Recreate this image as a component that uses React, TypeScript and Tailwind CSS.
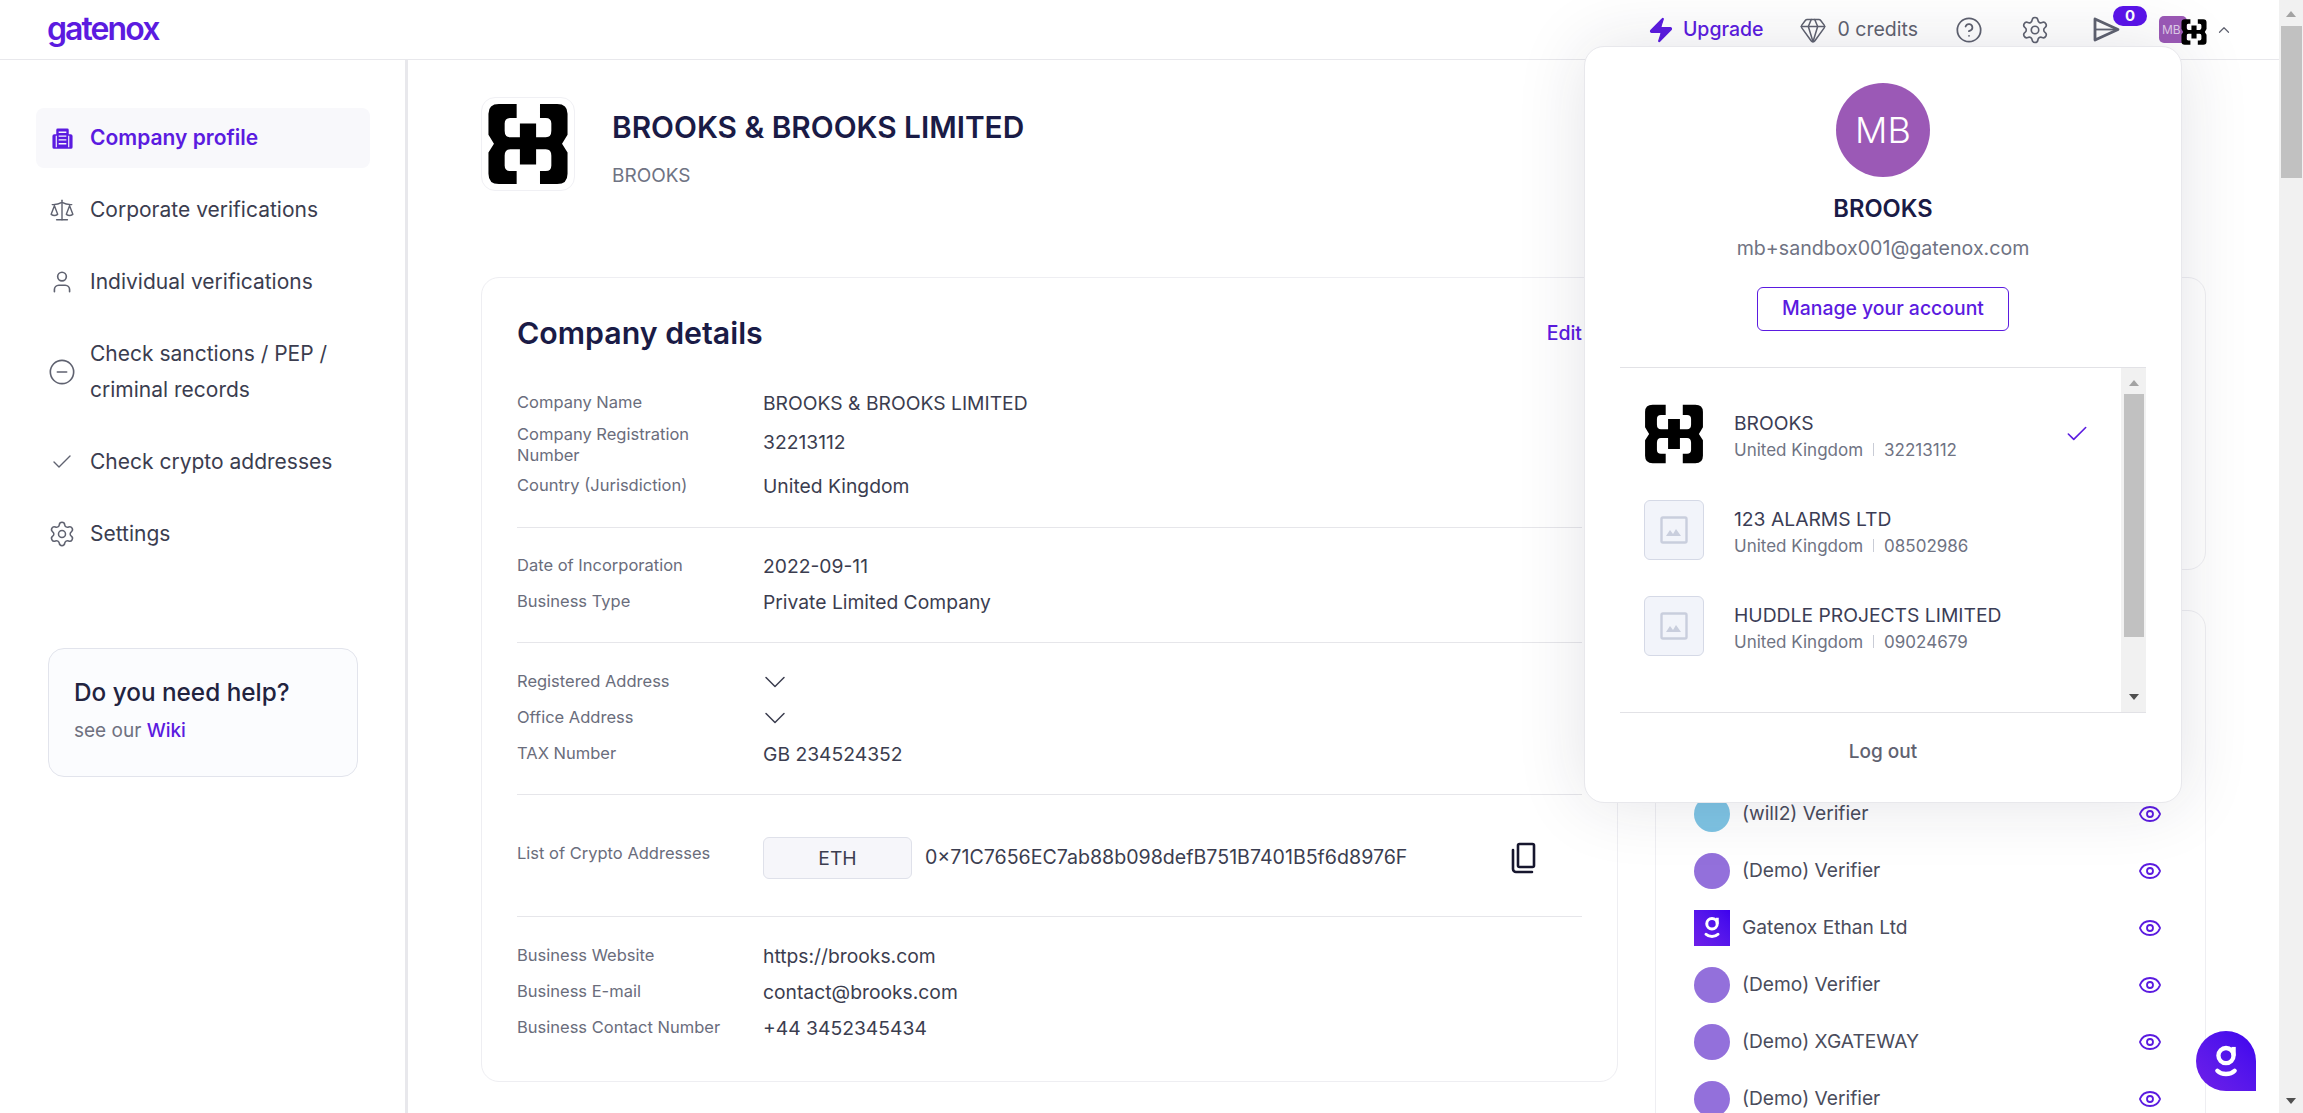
import { Check, ChevronDown, ChevronUp, CircleHelp, CircleMinus, Eye, Gem, Scale, Settings, User, Zap } from "lucide-react";

function BrooksLogo({ className }: { className?: string }) {
  return (
    <svg viewBox="25 22 250 253" className={className} fill="#000">
      <path d="M115 25H60Q28 25 28 55V120L45 148 28 175V240Q28 272 60 272H115V232H95Q78 232 78 215V185Q78 165 95 165H125V212H175V165H205Q222 165 222 185V215Q222 232 205 232H187V272H240Q272 272 272 240V175L255 148 272 120V55Q272 25 240 25H187V68H205Q222 68 222 85V108Q222 128 205 128H175V85H125V128H95Q78 128 78 108V85Q78 68 95 68H115Z" />
    </svg>
  );
}

function GMark({ className }: { className?: string }) {
  return (
    <svg viewBox="0 0 24 32" className={className} fill="none" stroke="#fff" strokeWidth="4" strokeLinecap="round">
      <circle cx="12" cy="11" r="7" />
      <path d="M19 3v8" strokeLinecap="butt" />
      <path d="M4 25c4 4 12 4 16 0" />
    </svg>
  );
}

function BuildingIcon() {
  return (
    <svg viewBox="0 0 24 24" className="w-[23px] h-[23px]" fill="#5b1be0">
      <path d="M7 1.500h10a1.500 1.500 0 0 1 1.500 1.500v4.500h2A2 2 0 0 1 22.500 9.500v11.500a1.800 1.800 0 0 1-1.800 1.800H3.300A1.800 1.800 0 0 1 1.500 21V9.500a2 2 0 0 1 2-2h2V3A1.500 1.500 0 0 1 7 1.500Z" />
      <path d="M8 5.500h8M8 9.500h8M8 13.500h8M8 17.500h8" stroke="#f8f8fb" strokeWidth="1.400" />
      <path d="M5.500 9v12M18.500 9v12" stroke="#f8f8fb" strokeWidth="1.200" />
    </svg>
  );
}

function SendIcon() {
  return (
    <svg viewBox="0 0 27 25" className="w-[27px] h-[25px]" fill="none" stroke="#5f6270" strokeWidth="2.800" strokeLinejoin="round">
      <path d="M2 2l23 10.500L2 23V2Z" />
      <path d="M2 12.500h23" strokeWidth="1.800" />
    </svg>
  );
}

function CopyIcon() {
  return (
    <svg viewBox="0 0 26 32" className="w-[26px] h-[32px]" fill="none" stroke="#16162e" strokeWidth="2.600" strokeLinejoin="round">
      <rect x="8" y="2" width="16" height="23" rx="1.500" />
      <path d="M3 8v19a3 3 0 0 0 3 3h16" strokeLinecap="round" />
    </svg>
  );
}

function Placeholder() {
  return (
    <div className="w-[60px] h-[60px] rounded-[6px] border border-[#d5d9e6] bg-[#f2f4fa] flex items-center justify-center shrink-0">
      <svg viewBox="0 0 28 28" className="w-[28px] h-[28px]" fill="none">
        <rect x="1.500" y="1.500" width="25" height="25" rx="1.500" stroke="#c9cedd" strokeWidth="2.400" />
        <path d="M6 20l4-6 3 4 3-5 5 7H6Z" fill="#c9cedd" />
      </svg>
    </div>
  );
}

function NavItem({ icon, children, tall }: { icon: React.ReactNode; children: React.ReactNode; tall?: boolean }) {
  return (
    <div className={`flex items-center pl-[12px] ${tall ? "h-[96px]" : "h-[60px]"}`}>
      <span className="w-[28px] flex justify-center text-[#5f6270] shrink-0">{icon}</span>
      <span className="ml-[14px] text-[21px] leading-[36px] text-[#3b3d4f]">{children}</span>
    </div>
  );
}

function Row({ label, children, className, labelClass }: { label: React.ReactNode; children: React.ReactNode; className?: string; labelClass?: string }) {
  return (
    <div className={`grid grid-cols-[246px_1fr] items-center ${className ?? "h-[36px]"}`}>
      <span className={`text-[16.500px] leading-[21px] text-[#6a6d7c] ${labelClass ?? "-mt-[2px]"}`}>{label}</span>
      <span className="text-[19.300px] text-[#3b3d4f]">{children}</span>
    </div>
  );
}

function Verifier({ name, avatar }: { name: string; avatar: React.ReactNode }) {
  return (
    <div className="flex items-center h-[57px] pl-[38px] pr-[43px]">
      {avatar}
      <span className="ml-[12px] text-[19.200px] text-[#4a4c5c] flex-1">{name}</span>
      <Eye size={24} strokeWidth={1.800} className="text-[#5b1be0]" />
    </div>
  );
}

const dot = <div className="w-[36px] h-[36px] rounded-full bg-[#9370db] shrink-0" />;

function Company({ logo, name, country, number, checked }: { logo: React.ReactNode; name: string; country: string; number: string; checked?: boolean }) {
  return (
    <div className="flex items-center pl-[24px] pr-[34px]">
      {logo}
      <div className="ml-[30px] flex-1 pt-[3px]">
        <div className="text-[19.300px] leading-[28px] text-[#3b3d55]">{name}</div>
        <div className="text-[17px] leading-[26px] text-[#6f7383] flex items-center">
          {country}
          <span className="mx-[10px] h-[13px] w-px bg-[#c9ccd6]" />
          {number}
        </div>
      </div>
      {checked && <Check size={26} strokeWidth={1.500} className="text-[#5b1be0] mr-[-3px]" />}
    </div>
  );
}

export default function App() {
  return (
    <div className="relative h-screen overflow-hidden flex bg-white font-['Inter',sans-serif]">
      <div className="flex-1 min-w-0 flex flex-col">
        <header className="h-[60px] shrink-0 border-b border-[#e8e8ec] flex items-center pl-[47px] pr-[46px]">
          <span className="text-[32px] font-semibold tracking-[-0.060em] text-[#5b1be0] leading-none -mt-[2px]">gatenox</span>
          <div className="ml-auto flex items-center">
            <Zap size={28} fill="#5b1be0" strokeWidth={1} className="text-[#5b1be0]" />
            <span className="ml-[8px] mt-[1px] text-[19.500px] font-medium text-[#5b1be0]">Upgrade</span>
            <Gem size={28} strokeWidth={1.300} className="ml-[35px] text-[#5f6270]" />
            <span className="ml-[11px] mt-[1px] text-[19.500px] text-[#5f6270]">0 credits</span>
            <CircleHelp size={28} strokeWidth={1.500} className="ml-[37px] text-[#5f6270]" />
            <Settings size={30} strokeWidth={1.300} className="ml-[37px] text-[#5f6270]" />
            <span className="relative ml-[43px]">
              <SendIcon />
              <span className="absolute -top-[11px] left-[20px] w-[34px] h-[20px] rounded-full bg-[#5b14ea] text-white text-[15px] leading-[20px] font-bold text-center">0</span>
            </span>
            <span className="relative ml-[39px] block w-[28px] h-[27px] rounded-[5px] bg-[#9b59b6] text-white/70 text-[12px] leading-[27px] pl-[3px] overflow-visible">
              MB
              <BrooksLogo className="absolute top-[3px] left-[22px] w-[26px] h-[26px]" />
            </span>
            <ChevronUp size={18} strokeWidth={1.600} className="ml-[28px] text-[#5f6270]" />
          </div>
        </header>
        <div className="flex flex-1 min-h-0">
          <aside className="w-[408px] shrink-0 border-r-[3px] border-[#e8e8ec] pt-[48px] pl-[36px] pr-[35px]">
            <nav className="flex flex-col gap-[12px]">
              <div className="flex items-center pl-[12px] h-[60px] rounded-[8px] bg-[#f8f8fb]">
                <span className="w-[28px] flex justify-center shrink-0"><BuildingIcon /></span>
                <span className="ml-[14px] text-[21px] font-semibold text-[#5b1be0]">Company profile</span>
              </div>
              <NavItem icon={<Scale size={26} strokeWidth={1.300} />}>Corporate verifications</NavItem>
              <NavItem icon={<User size={26} strokeWidth={1.500} />}>Individual verifications</NavItem>
              <NavItem tall icon={<CircleMinus size={28} strokeWidth={1.400} />}>Check sanctions / PEP /<br />criminal records</NavItem>
              <NavItem icon={<Check size={24} strokeWidth={1.400} />}>Check crypto addresses</NavItem>
              <NavItem icon={<Settings size={30} strokeWidth={1.300} />}>Settings</NavItem>
            </nav>
            <div className="ml-[12px] mt-[84px] w-[310px] h-[129px] rounded-[16px] border border-[#e2e4ec] bg-[#fbfcfe] px-[25px] pt-[26px]">
              <div className="text-[24.300px] leading-[34px] font-medium text-[#22233f]">Do you need help?</div>
              <div className="mt-[9px] text-[19px] leading-[26px] text-[#6f7180]">see our <span className="text-[#5b1be0] font-medium">Wiki</span></div>
            </div>
          </aside>
          <main className="flex-1 min-w-0 pl-[73px] pt-[37px]">
            <div className="flex items-start">
              <div className="w-[94px] h-[94px] rounded-[14px] border border-[#f0f0f4] flex items-center justify-center">
                <BrooksLogo className="w-[82px] h-[82px]" />
              </div>
              <div className="ml-[37px] pt-[10px]">
                <h1 className="text-[29.800px] leading-[40px] font-semibold text-[#1a1b46]">BROOKS &amp; BROOKS LIMITED</h1>
                <div className="mt-[16px] text-[19px] leading-[26px] text-[#6f7383]">BROOKS</div>
              </div>
            </div>
            <div className="mt-[86px] flex gap-[37px] items-start">
              <section className="w-[1137px] shrink-0 h-[805px] rounded-[18px] border border-[#eeeef2] px-[35px] pt-[36px]">
                <div className="flex items-center justify-between h-[40px]">
                  <h2 className="text-[30.300px] font-semibold text-[#1a1b46]">Company details</h2>
                  <span className="text-[19.500px] font-medium text-[#5b1be0]">Edit</span>
                </div>
                <div className="mt-[34px] h-[140px] border-b border-[#e6e6ea]">
                  <Row label="Company Name" className="h-[30px]">BROOKS &amp; BROOKS LIMITED</Row>
                  <Row label={<>Company Registration<br />Number</>} className="h-[43px]" labelClass="mt-[6px]">32213112</Row>
                  <Row label="Country (Jurisdiction)" className="h-[51px]">United Kingdom</Row>
                </div>
                <div className="h-[115px] pt-[20px] border-b border-[#e6e6ea]">
                  <Row label="Date of Incorporation">2022-09-11</Row>
                  <Row label="Business Type">Private Limited Company</Row>
                </div>
                <div className="h-[152px] pt-[21px] border-b border-[#e6e6ea]">
                  <Row label="Registered Address"><ChevronDown size={36} strokeWidth={1} className="-ml-[6px]" /></Row>
                  <Row label="Office Address"><ChevronDown size={36} strokeWidth={1} className="-ml-[6px]" /></Row>
                  <Row label="TAX Number">GB 234524352</Row>
                </div>
                <div className="h-[122px] pt-[42px] border-b border-[#e6e6ea]">
                  <div className="grid grid-cols-[246px_1fr] items-center h-[42px]">
                    <span className="text-[16.500px] text-[#6a6d7c] -mt-[10px]">List of Crypto Addresses</span>
                    <div className="flex items-center">
                      <span className="w-[149px] h-[42px] rounded-[6px] border border-[#dfe1ea] bg-[#f6f6fa] flex items-center justify-center text-[19.300px] text-[#3b3d4f]">ETH</span>
                      <span className="ml-[13px] text-[19.600px] text-[#3b3d4f]">0×71C7656EC7ab88b098defB751B7401B5f6d8976F</span>
                      <span className="ml-auto mr-[46px]"><CopyIcon /></span>
                    </div>
                  </div>
                </div>
                <div className="pt-[21px]">
                  <Row label="Business Website">https://brooks.com</Row>
                  <Row label="Business E-mail">contact@brooks.com</Row>
                  <Row label="Business Contact Number">+44 3452345434</Row>
                </div>
              </section>
              <div className="w-[551px] shrink-0 flex flex-col gap-[40px]">
                <div className="h-[293px] rounded-[18px] border border-[#eeeef2]" />
                <div className="h-[600px] rounded-[18px] border border-[#eeeef2] pt-[174px]">
                  <Verifier name="(will2) Verifier" avatar={<div className="w-[36px] h-[36px] rounded-full bg-[#7ec4e4] shrink-0" />} />
                  <Verifier name="(Demo) Verifier" avatar={dot} />
                  <Verifier
                    name="Gatenox Ethan Ltd"
                    avatar={
                      <div className="w-[36px] h-[36px] bg-gradient-to-tr from-[#6f1ee8] to-[#3d00ee] flex items-center justify-center shrink-0">
                        <GMark className="w-[18px] h-[25px]" />
                      </div>
                    }
                  />
                  <Verifier name="(Demo) Verifier" avatar={dot} />
                  <Verifier name="(Demo) XGATEWAY" avatar={dot} />
                  <Verifier name="(Demo) Verifier" avatar={dot} />
                </div>
              </div>
            </div>
          </main>
        </div>
      </div>

      {/* page scrollbar */}
      <div className="w-[24px] shrink-0 bg-[#f1f1f1] flex flex-col items-center">
        <svg viewBox="0 0 10 6" className="w-[10px] h-[6px] mt-[11px] mb-[9px]"><path d="M5 0l5 6H0Z" fill="#a3a3a3" /></svg>
        <div className="w-[21px] h-[152px] bg-[#c1c1c1]" />
        <svg viewBox="0 0 10 6" className="w-[10px] h-[6px] mt-auto mb-[9px]"><path d="M0 0h10L5 6Z" fill="#505050" /></svg>
      </div>

      {/* account popup */}
      <div className="absolute top-[46px] right-[121px] w-[598px] h-[757px] rounded-[20px] bg-white border border-[#e8e8ec] shadow-[0_0_70px_rgba(30,30,60,0.12)] flex flex-col items-center pt-[36px]">
        <div className="w-[94px] h-[94px] rounded-full bg-[#9b59b6] text-white text-[36px] font-light flex items-center justify-center">MB</div>
        <div className="mt-[17px] text-[23.700px] leading-[30px] font-semibold text-[#1a1b46]">BROOKS</div>
        <div className="mt-[10px] text-[19.600px] leading-[28px] text-[#6f7383]">mb+sandbox001@gatenox.com</div>
        <div className="mt-[25px] w-[252px] h-[44px] rounded-[6px] border border-[#5b1be0] text-[#5b1be0] text-[19.400px] font-medium flex items-center justify-center">Manage your account</div>
        <div className="mt-[36px] self-stretch ml-[35px] mr-[35px] h-[346px] border-y border-[#e2e2e6] flex">
          <div className="flex-1 flex flex-col gap-[36px] pt-[36px]">
            <Company logo={<BrooksLogo className="w-[60px] h-[60px] shrink-0" />} name="BROOKS" country="United Kingdom" number="32213112" checked />
            <Company logo={<Placeholder />} name="123 ALARMS LTD" country="United Kingdom" number="08502986" />
            <Company logo={<Placeholder />} name="HUDDLE PROJECTS LIMITED" country="United Kingdom" number="09024679" />
          </div>
          <div className="w-[25px] bg-[#f1f1f1] flex flex-col items-center">
            <svg viewBox="0 0 10 6" className="w-[10px] h-[6px] mt-[12px] mb-[8px]"><path d="M5 0l5 6H0Z" fill="#a3a3a3" /></svg>
            <div className="w-[20px] h-[243px] bg-[#c1c1c1]" />
            <svg viewBox="0 0 10 6" className="w-[10px] h-[6px] mt-auto mb-[12px]"><path d="M0 0h10L5 6Z" fill="#505050" /></svg>
          </div>
        </div>
        <div className="h-[78px] flex items-center text-[19px] font-medium text-[#5f6270]">Log out</div>
      </div>

      {/* chat bubble */}
      <div className="absolute top-[1031px] left-[2196px] w-[60px] h-[60px] rounded-t-full rounded-bl-full rounded-br-[4px] bg-gradient-to-tr from-[#6f1ee8] to-[#3d00ee] flex items-center justify-center">
        <GMark className="w-[26px] h-[36px]" />
      </div>
    </div>
  );
}
